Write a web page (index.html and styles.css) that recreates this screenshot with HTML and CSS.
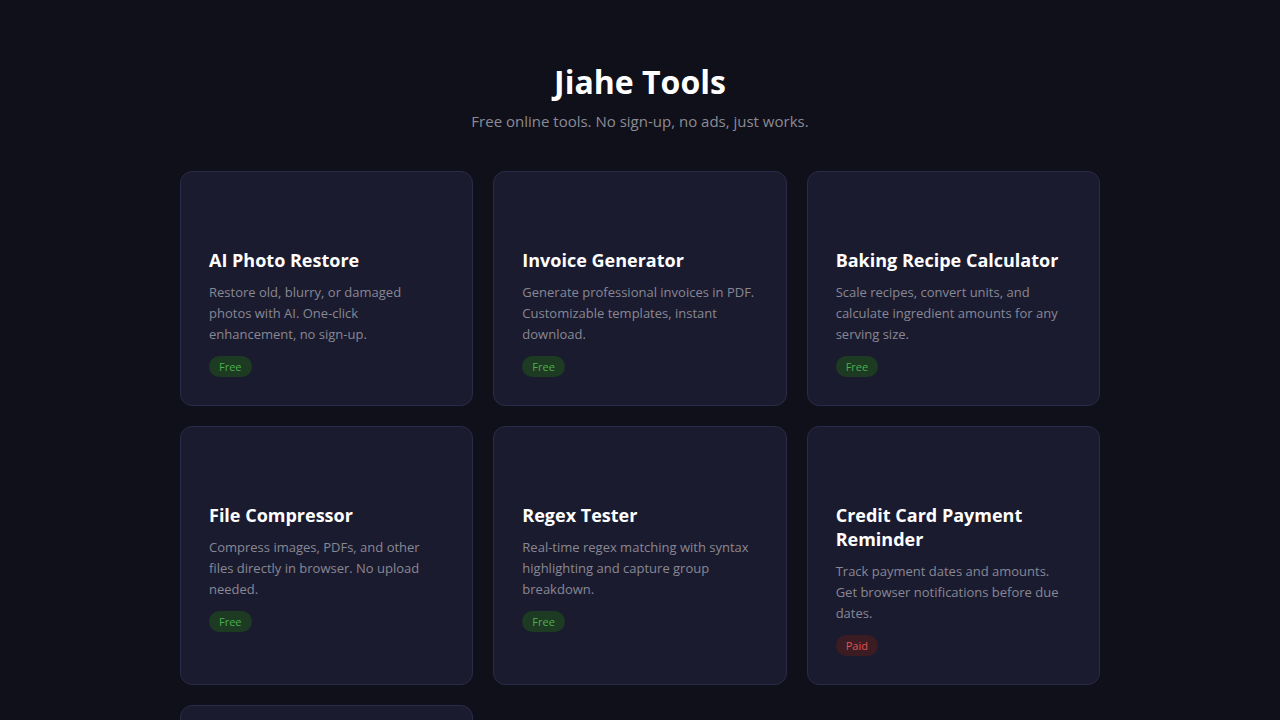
FILE: index.html
```html
<!DOCTYPE html>
<html lang="en">
  <head>
    <meta charset="utf-8" />
    <meta name="viewport" content="width=device-width, initial-scale=1" />
    <title>Jiahe Tools</title>
    <link rel="stylesheet" href="styles.css">
  </head>
  <body>
    <div class="container">
      <header class="header">
        <h1>Jiahe Tools</h1>
        <p class="subtitle">Free online tools. No sign-up, no ads, just works.</p>
      </header>

      <!-- tool cards, icon slot is left empty -->
      <div class="grid">
        <a class="card" href="#">
          <div class="icon"></div>
          <h2>AI Photo Restore</h2>
          <p>Restore old, blurry, or damaged photos with AI. One-click enhancement, no sign-up.</p>
          <span class="badge free">Free</span>
        </a>
        <a class="card" href="#">
          <div class="icon"></div>
          <h2>Invoice Generator</h2>
          <p>Generate professional invoices in PDF. Customizable templates, instant download.</p>
          <span class="badge free">Free</span>
        </a>
        <a class="card" href="#">
          <div class="icon"></div>
          <h2>Baking Recipe Calculator</h2>
          <p>Scale recipes, convert units, and calculate ingredient amounts for any serving size.</p>
          <span class="badge free">Free</span>
        </a>
        <a class="card" href="#">
          <div class="icon"></div>
          <h2>File Compressor</h2>
          <p>Compress images, PDFs, and other files directly in browser. No upload needed.</p>
          <span class="badge free">Free</span>
        </a>
        <a class="card" href="#">
          <div class="icon"></div>
          <h2>Regex Tester</h2>
          <p>Real-time regex matching with syntax highlighting and capture group breakdown.</p>
          <span class="badge free">Free</span>
        </a>
        <a class="card" href="#">
          <div class="icon"></div>
          <h2>Credit Card Payment Reminder</h2>
          <p>Track payment dates and amounts. Get browser notifications before due dates.</p>
          <span class="badge paid">Paid</span>
        </a>
        <a class="card" href="#">
          <div class="icon"></div>
          <h2>JSON Formatter</h2>
          <p>Format, validate and minify JSON right in your browser.</p>
          <span class="badge free">Free</span>
        </a>
      </div>
    </div>
  </body>
</html>
```

FILE: styles.css
```css
body {
  margin: 0;
  background-color: #10101a;
  color: #fff;
  font-family: "Open Sans", "Noto Sans", sans-serif;
}

.container {
  width: 920px;
  margin: 0 auto;
  padding-top: 63px;
}

.header {
  text-align: center;
  margin-bottom: 39px;
}

.header h1 {
  margin: 0 0 9px;
  font-size: 32px;
  line-height: 38px;
  font-weight: 700;
}

.subtitle {
  margin: 0;
  font-size: 15px;
  line-height: 22px;
  color: #8b8b96;
}

.grid {
  display: grid;
  grid-template-columns: repeat(3, 1fr);
  gap: 20px;
}

.card {
  display: flex;
  flex-direction: column;
  align-items: flex-start;
  padding: 28px;
  background-color: #1b1b2f;
  border: 1px solid #2b2b48;
  border-radius: 12px;
  color: inherit;
  text-decoration: none;
}

/* emoji slot, renders blank */
.card .icon {
  height: 36px;
  margin-bottom: 12px;
}

.card h2 {
  margin: 0 0 10px;
  font-size: 18px;
  line-height: 24px;
  font-weight: 700;
}

.card p {
  margin: 0 0 11px;
  font-size: 13px;
  line-height: 21px;
  color: #888894;
}

.badge {
  display: inline-block;
  padding: 3px 10px;
  border-radius: 11px;
  font-size: 11px;
  line-height: 15px;
}

.badge.free {
  background-color: #1d3a22;
  color: #4caf50;
}

.badge.paid {
  background-color: #3a1c22;
  color: #e05555;
}
```
